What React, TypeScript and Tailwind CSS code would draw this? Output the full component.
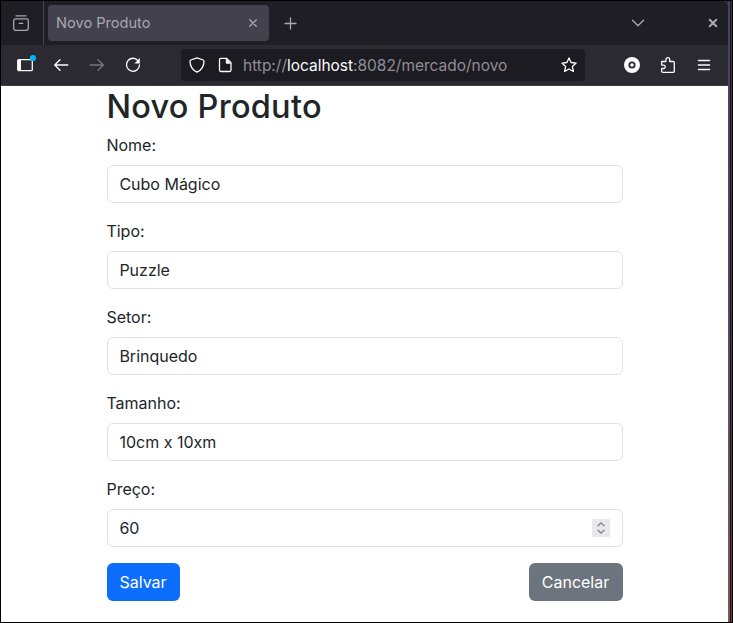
import type { ReactNode } from "react";

const fields = [
  { label: "Nome:", value: "Cubo Mágico" },
  { label: "Tipo:", value: "Puzzle" },
  { label: "Setor:", value: "Brinquedo" },
  { label: "Tamanho:", value: "10cm x 10xm" },
  { label: "Preço:", value: "60", stepper: true },
];

function Icon({ size = 16, className = "", children }: { size?: number; className?: string; children: ReactNode }) {
  return (
    <svg
      width={size}
      height={size}
      viewBox={`0 0 ${size} ${size}`}
      className={`block shrink-0 overflow-visible ${className}`}
      fill="none"
      stroke="currentColor"
      strokeWidth="1.3"
      strokeLinecap="round"
      strokeLinejoin="round"
    >
      {children}
    </svg>
  );
}

function TabStrip() {
  return (
    <div className="flex h-11 items-center bg-[#1f1e25] text-[#a9a8ad]">
      <div className="flex h-full w-[43px] shrink-0 items-center border-r border-[#45444c] pl-3">
        <Icon>
          <path d="M3 .8h10M2.3 3.9h11.4a1.6 1.6 0 0 1 1.6 1.6v7.6a2.2 2.2 0 0 1-2.2 2.2H2.9a2.2 2.2 0 0 1-2.2-2.2V5.5a1.6 1.6 0 0 1 1.6-1.6zM6.3 8.4h3.4" />
        </Icon>
      </div>
      <div className="ml-1 flex h-9 w-[221px] shrink-0 items-center justify-between rounded bg-[#42414d] pr-3 pl-2">
        <span className="text-[14.6px] leading-5">Novo Produto</span>
        <Icon size={8}>
          <path d="M.7.7l6.6 6.6M7.3.7L.7 7.3" />
        </Icon>
      </div>
      <Icon size={11} className="mt-px ml-4">
        <path d="M5.500 0v11M0 5.500h11" />
      </Icon>
      <Icon size={12} className="ml-auto">
        <path d="M.4 3.2L6 8.8l5.6-5.6" />
      </Icon>
      <Icon size={8} className="mr-[11px] ml-[65px]">
        <path d="M.7.7l6.6 6.6M7.3.7L.7 7.3" strokeWidth="2" />
      </Icon>
    </div>
  );
}

function Toolbar() {
  return (
    <div className="flex h-[41px] items-center border-b border-[#3d3c45] bg-[#2b2a33] text-[#fbfbfe]">
      <Icon className="ml-4">
        <rect x=".7" y="2.600" width="14.6" height="11" rx="1.2" />
        <path d="M1 2.600h3v11H1z" fill="currentColor" stroke="none" />
        <circle cx="16" cy="1" r="3.100" fill="#00b3f4" stroke="none" />
      </Icon>
      <Icon className="ml-5">
        <path d="M14.8 8H2M7 2.7L1.7 8 7 13.3" />
      </Icon>
      <Icon className="ml-5 text-[#77767d]">
        <path d="M1.2 8H14M9 2.7L14.3 8 9 13.3" />
      </Icon>
      <Icon className="ml-5">
        <path d="M13 3.600A6.500 6.500 0 1 0 14.500 8" />
        <path d="M14.8 1v4.900a.5.5 0 0 1-.5.5H9.400z" fill="currentColor" stroke="none" />
      </Icon>
      <div className="ml-10 flex h-8 w-[404px] shrink-0 items-center rounded bg-[#1c1b22] pr-2 pl-2">
        <Icon>
          <path d="M8 .8L14.2 3c.5.2.8.6.8 1.1 0 5.7-2.7 9.2-7 11.1C3.700 13.300 1 9.800 1 4.100 1 3.600 1.300 3.200 1.800 3z" />
        </Icon>
        <Icon className="ml-3">
          <path d="M4 1.300h5.500l4.500 4.500v7.200a1.500 1.500 0 0 1-1.500 1.500H4a1.500 1.500 0 0 1-1.500-1.500V2.800a1.500 1.500 0 0 1 1.500-1.500z" />
          <path d="M8.800 1.300v4.700a.7.7 0 0 0 .7.700h4.600z" fill="currentColor" stroke="none" />
        </Icon>
        <span className="ml-[10px] pt-0.5 text-[15.47px] leading-6 whitespace-nowrap text-[#8f8e95]">
          http://<span className="text-[#fbfbfe]">localhost</span>:8082/mercado/novo
        </span>
        <Icon className="ml-auto">
          <path d="M8 .9l2.100 4.600 5 .6-3.700 3.400 1 5L8 12l-4.400 2.500 1-5L.9 6.100l5-.6z" />
        </Icon>
      </div>
      <Icon className="ml-[39px]">
        <circle cx="8" cy="8" r="8" fill="currentColor" stroke="none" />
        <circle cx="8" cy="8" r="2.700" stroke="#2b2a33" strokeWidth="1.800" />
      </Icon>
      <Icon className="ml-5">
        <path d="M1.700 4.500h4.200V2.600a1.900 1.900 0 0 1 3.800 0v1.900h3.400a1.200 1.200 0 0 1 1.200 1.200v8.500a1.100 1.100 0 0 1-1.100 1.100H2.800a1.100 1.100 0 0 1-1.100-1.100v-2.700h1.900a1.700 1.700 0 0 0 0-3.400H1.700z" />
      </Icon>
      <Icon size={12} className="ml-[22px]">
        <path d="M.4 1.500h11.200M.4 6h11.200M.4 10.500h11.200" />
      </Icon>
    </div>
  );
}

export default function App() {
  return (
    <div className="flex h-[623px] w-[733px] overflow-hidden border-t border-b border-l border-black bg-black font-['Inter',sans-serif]">
      <div className="flex w-[727px] shrink-0 flex-col overflow-hidden rounded-tr-sm bg-white">
        <TabStrip />
        <Toolbar />
        <form className="ml-[106px] w-[516px] text-[16px] leading-6 text-[#212529]">
          <h2 className="mb-2 -ml-[0.6px] h-[39px] text-[32.5px] leading-[41px] font-medium tracking-[0.25px]">Novo Produto</h2>
          {fields.map(({ label, value, stepper }) => (
            <div key={label} className="mb-4">
              <div className="mb-2 -ml-[0.6px]">{label}</div>
              <div className="flex h-[38px] items-center justify-between rounded-md border border-[#dee2e6] pr-3 pl-[11.4px]">
                <span>{value}</span>
                {stepper && (
                  <span className="flex h-[18px] w-[18px] items-center justify-center bg-[#e9e9ed] text-[#8f8f98]">
                    <Icon size={12}>
                      <path d="M3 3.800L6 .9l3 2.900M3 8.200l3 2.900 3-2.900" strokeWidth="1.500" />
                    </Icon>
                  </span>
                )}
              </div>
            </div>
          ))}
          <div className="flex justify-between text-white">
            <button type="button" className="h-[38px] w-[73px] rounded-md bg-[#0d6efd] pr-px">Salvar</button>
            <button type="button" className="h-[38px] w-[94px] rounded-md bg-[#6c757d] pr-px">Cancelar</button>
          </div>
        </form>
      </div>
      <div className="w-0.5 bg-linear-to-b from-[#3c465f] via-[#4b4e69] to-[#795c50]" />
      <div className="w-px bg-[#171320]" />
      <div className="w-px bg-linear-to-b from-[#4b2948] to-[#74363c]" />
    </div>
  );
}
